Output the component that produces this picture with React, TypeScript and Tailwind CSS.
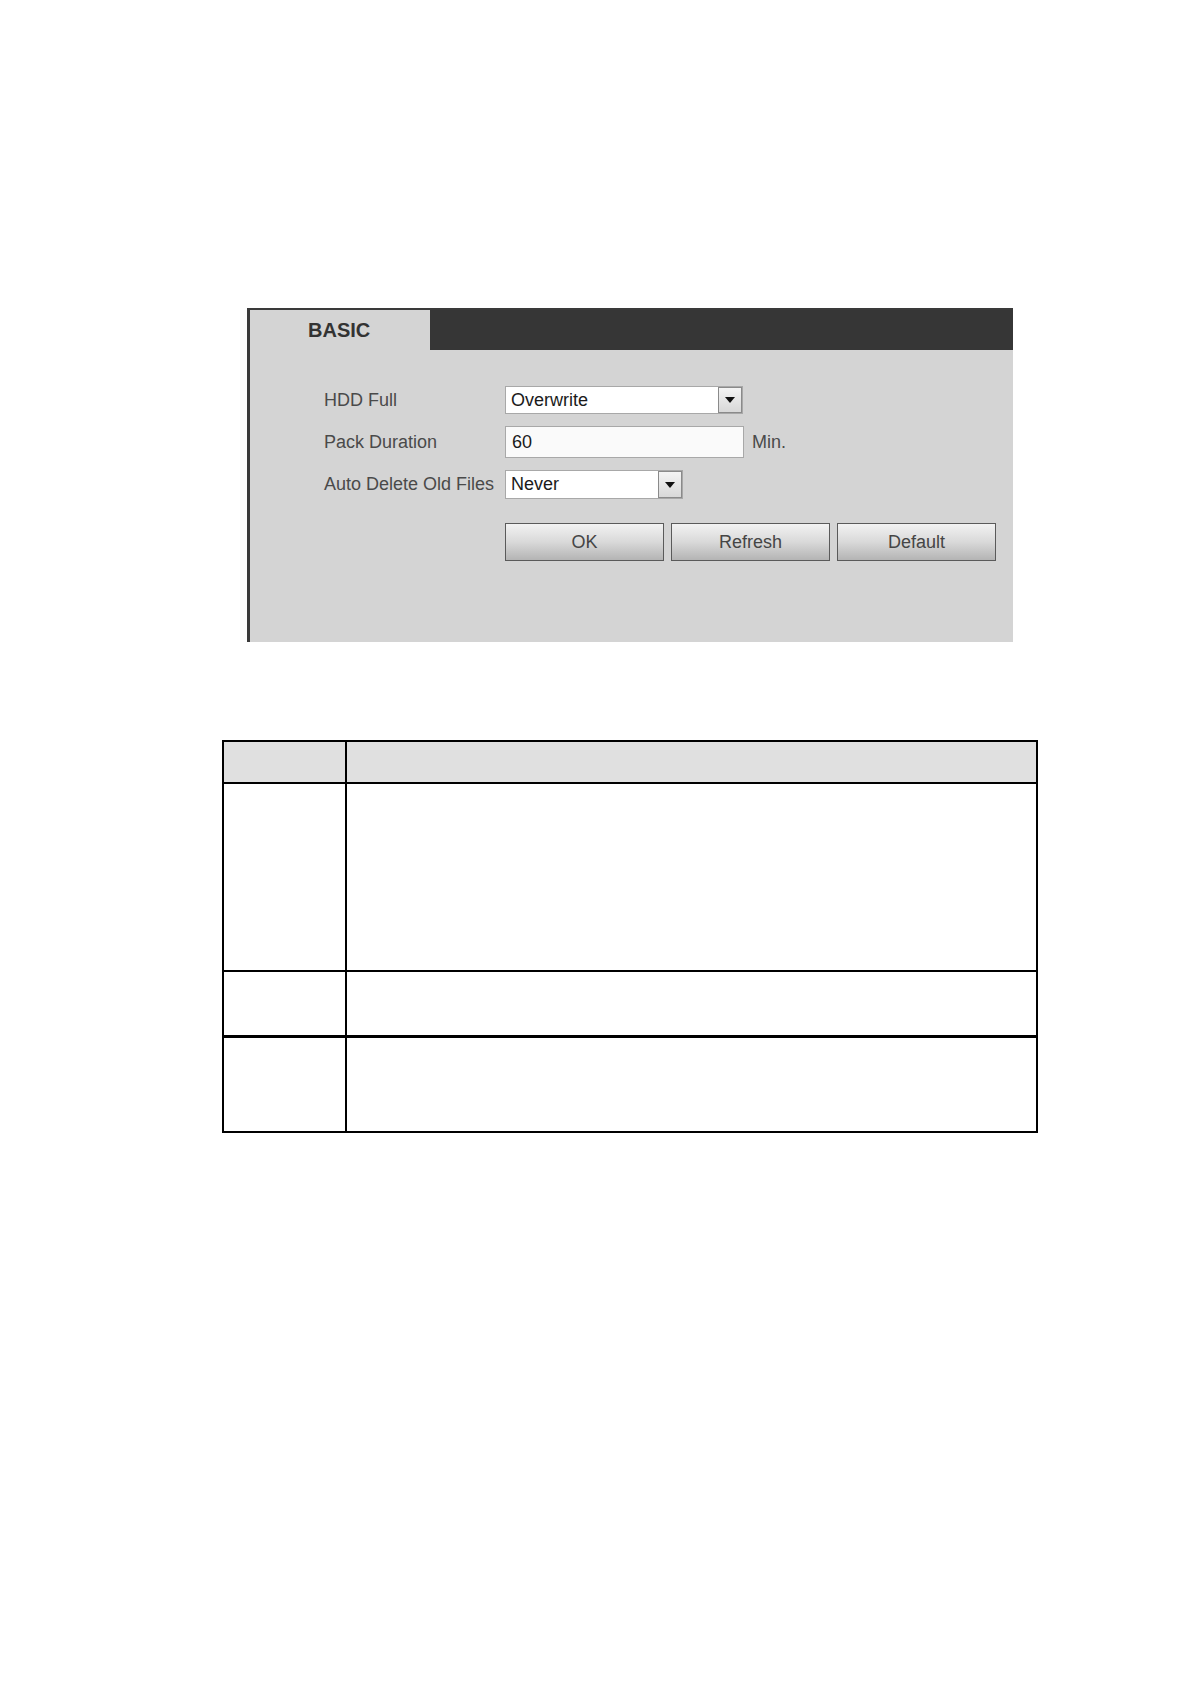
import React from "react";

const font = { fontFamily: '"Liberation Sans", Arial, sans-serif' };

function Arrow() {
  return (
    <div className="flex h-full w-[24px] items-center justify-center border border-[#8a8a8a] bg-gradient-to-b from-[#f4f4f4] to-[#d8d8d8]">
      <svg width="10" height="6" viewBox="0 0 10 6">
        <path d="M0 0 L10 0 L5 6 Z" fill="#111" />
      </svg>
    </div>
  );
}

function Select({ value, width }: { value: string; width: string }) {
  return (
    <div className={`flex h-full items-stretch border border-[#a8a8a8] bg-white ${width}`}>
      <div className="flex flex-1 items-center pl-[5px] text-[18px] text-[#1a1a1a]">{value}</div>
      <Arrow />
    </div>
  );
}

function Btn({ label }: { label: string }) {
  return (
    <div className="flex h-[38px] w-[159px] items-center justify-center border-[1.5px] border-[#5a5a5a] bg-gradient-to-b from-[#f2f2f2] via-[#d9d9d9] to-[#b4b4b4] text-[18px] text-[#454545]">
      {label}
    </div>
  );
}

export default function App() {
  return (
    <div className="min-h-[1684px] w-[1191px] bg-white pt-[308px]" style={font}>
      <div className="ml-[247px] flex h-[334px] w-[766px] flex-col border-l-[3px] border-t-[2px] border-[#3a3a3a] bg-[#d4d4d4]">
        <div className="flex h-[40px]">
          <div className="flex w-[180px] items-center pl-[58px] text-[20px] font-bold text-[#333]">BASIC</div>
          <div className="flex-1 bg-[#363636]"></div>
        </div>
        <div className="flex flex-col pl-[74px] pt-[36px] text-[18px] text-[#4a4a4a]">
          <div className="flex h-[28px] items-center">
            <div className="w-[181px]">HDD Full</div>
            <Select value="Overwrite" width="w-[238px]" />
          </div>
          <div className="mt-[12px] flex h-[32px] items-center">
            <div className="w-[181px]">Pack Duration</div>
            <div className="flex h-full w-[239px] items-center border border-[#a8a8a8] bg-[#fafafa] pl-[6px] text-[#1a1a1a]">60</div>
            <div className="ml-[8px]">Min.</div>
          </div>
          <div className="mt-[12px] flex h-[29px] items-center">
            <div className="w-[181px] whitespace-nowrap">Auto Delete Old Files</div>
            <Select value="Never" width="w-[178px]" />
          </div>
          <div className="mt-[24px] flex gap-[7px] pl-[181px]">
            <Btn label="OK" />
            <Btn label="Refresh" />
            <Btn label="Default" />
          </div>
        </div>
      </div>

      <div className="ml-[222px] mt-[98px] w-[816px] border-2 border-black">
        <div className="flex h-[40px] bg-[#e0e0e0]">
          <div className="w-[123px] border-r-2 border-black"></div>
          <div className="flex-1"></div>
        </div>
        <div className="flex h-[188px] border-t-2 border-black">
          <div className="w-[123px] border-r-2 border-black"></div>
          <div className="flex-1"></div>
        </div>
        <div className="flex h-[65px] border-t-2 border-black">
          <div className="w-[123px] border-r-2 border-black"></div>
          <div className="flex-1"></div>
        </div>
        <div className="flex h-[96px] border-t-[3px] border-black">
          <div className="w-[123px] border-r-2 border-black"></div>
          <div className="flex-1"></div>
        </div>
      </div>
    </div>
  );
}
